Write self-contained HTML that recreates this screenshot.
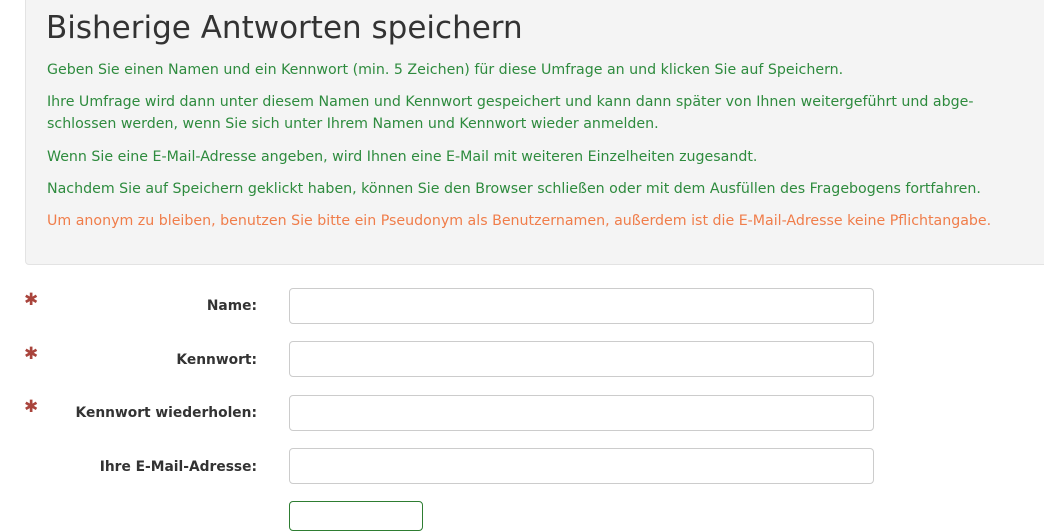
<!DOCTYPE html>
<html><head><meta charset="utf-8"><style>
body{margin:0;width:1044px;height:508px;overflow:hidden;background:#fff;font-family:"DejaVu Sans","Liberation Sans",sans-serif;position:relative}
.panel{position:absolute;left:25px;top:-5px;width:1040px;height:270px;background:#f4f4f4;border:1px solid #e3e3e3;border-radius:4px;box-sizing:border-box}
.t{position:absolute;left:47px;white-space:nowrap;font-size:14.2px;color:#2e8b3e}
h1{position:absolute;left:46px;top:10px;margin:0;font-weight:normal;font-size:31px;color:#333;white-space:nowrap}
.o{color:#f07d4a}
.lab{position:absolute;right:787px;font-weight:bold;font-size:13.8px;color:#333;white-space:nowrap}
.ast{position:absolute;left:24px;color:#a9443c;font-size:17px;font-weight:bold}
.in{position:absolute;left:289px;width:585px;height:36px;border:1px solid #ccc;border-radius:4px;box-sizing:border-box;background:#fff}
.btn{position:absolute;left:289px;top:501px;width:134px;height:30px;border:1px solid #2e7d32;border-radius:4px;box-sizing:border-box}
</style></head><body>
<div class="panel"></div>
<h1>Bisherige Antworten speichern</h1>
<div class="t" style="top:62px">Geben Sie einen Namen und ein Kennwort (min. 5 Zeichen) für diese Umfrage an und klicken Sie auf Speichern.</div>
<div class="t" style="top:94px">Ihre Umfrage wird dann unter diesem Namen und Kennwort gespeichert und kann dann später von Ihnen weitergeführt und abge-</div>
<div class="t" style="top:116px">schlossen werden, wenn Sie sich unter Ihrem Namen und Kennwort wieder anmelden.</div>
<div class="t" style="top:149px">Wenn Sie eine E-Mail-Adresse angeben, wird Ihnen eine E-Mail mit weiteren Einzelheiten zugesandt.</div>
<div class="t" style="top:181px">Nachdem Sie auf Speichern geklickt haben, können Sie den Browser schließen oder mit dem Ausfüllen des Fragebogens fortfahren.</div>
<div class="t o" style="top:213px">Um anonym zu bleiben, benutzen Sie bitte ein Pseudonym als Benutzernamen, außerdem ist die E-Mail-Adresse keine Pflichtangabe.</div>

<div class="ast" style="top:290px">✱</div>
<div class="ast" style="top:344px">✱</div>
<div class="ast" style="top:397px">✱</div>
<div class="lab" style="top:298px">Name:</div>
<div class="lab" style="top:352px">Kennwort:</div>
<div class="lab" style="top:405px">Kennwort wiederholen:</div>
<div class="lab" style="top:459px">Ihre E-Mail-Adresse:</div>
<div class="in" style="top:288px"></div>
<div class="in" style="top:341px"></div>
<div class="in" style="top:395px"></div>
<div class="in" style="top:448px"></div>
<div class="btn"></div>
</body></html>
